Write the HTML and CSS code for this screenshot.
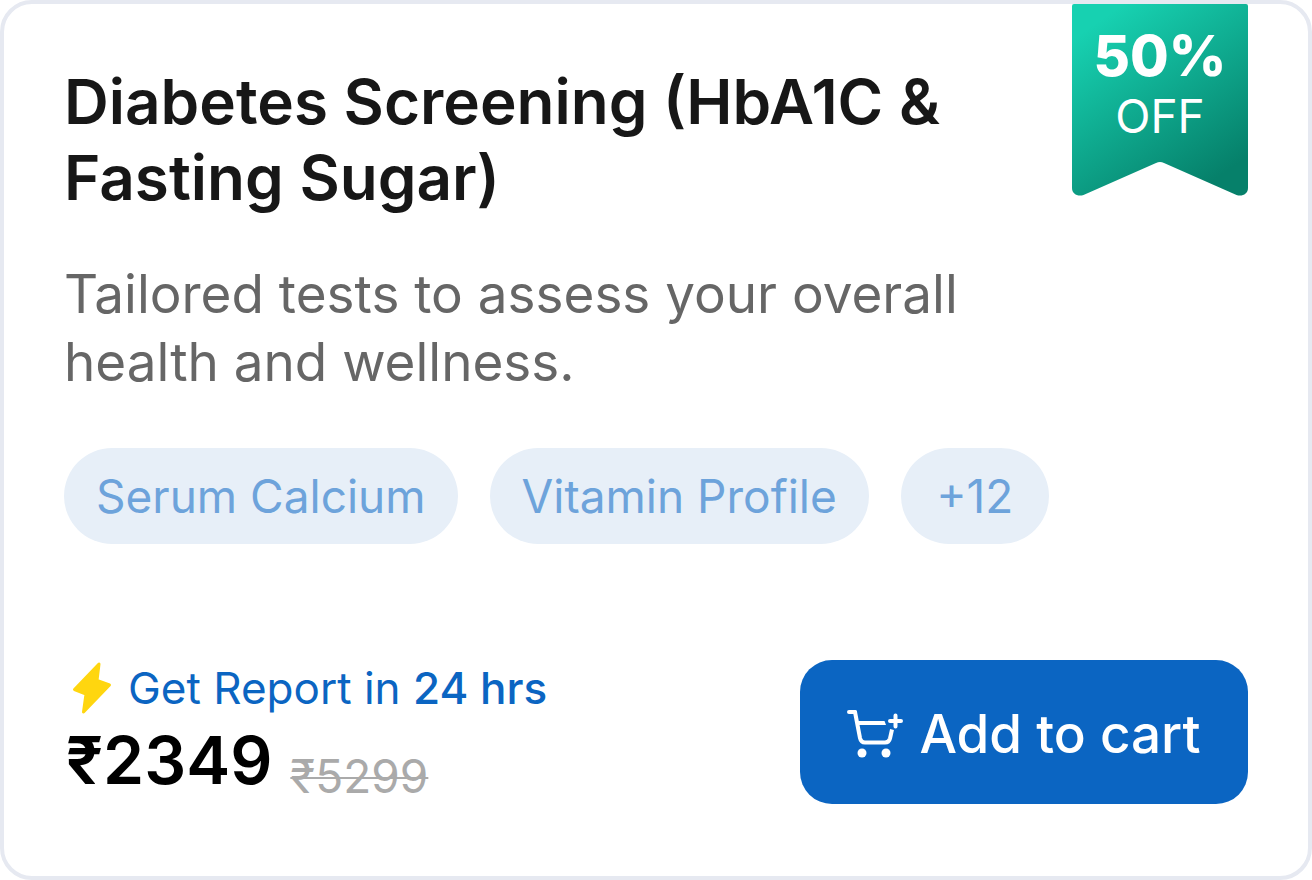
FILE: index.html
```html
<!DOCTYPE html>
<html lang="en">
<head>
    <meta charset="UTF-8">
    <meta name="viewport" content="width=device-width, initial-scale=1.0">
    <title>Diabetes Screening</title>
    <link rel="stylesheet" href="styles.css">
</head>
<body>
    <div class="card">
        <!-- Discount ribbon -->
        <div class="ribbon">
            <svg class="ribbon-shape" viewBox="0 0 176 192" aria-hidden="true">
                <defs>
                    <linearGradient id="ribbon-fill" gradientUnits="userSpaceOnUse" x1="30" y1="15" x2="142" y2="176">
                        <stop offset="0" stop-color="#17d1b1"/>
                        <stop offset="1" stop-color="#06806a"/>
                    </linearGradient>
                </defs>
                <path fill="url(#ribbon-fill)" d="M2 0H174Q176 0 176 2V184C176 190 170 193 164.500 191L92 159Q88 157 84 159L11.500 191C6 193 0 190 0 184V2Q0 0 2 0Z"/>
            </svg>
            <span class="ribbon-value">50%</span>
            <span class="ribbon-label">OFF</span>
        </div>

        <h1 class="title">Diabetes Screening (HbA1C &amp; Fasting Sugar)</h1>
        <p class="description">Tailored tests to assess your overall health and wellness.</p>

        <ul class="tags">
            <li class="tag">Serum Calcium</li>
            <li class="tag">Vitamin Profile</li>
            <li class="tag">+12</li>
        </ul>

        <!-- Price and cart button -->
        <div class="footer">
            <div class="details">
                <p class="report">
                    <svg class="bolt" viewBox="0 0 40 54" aria-hidden="true">
                        <path fill="#ffd60f" stroke="#ffd60f" stroke-width="3" stroke-linejoin="round" d="M27 3 2.500 28.500 14 33 11.500 51 37.500 24 25 19.500Z"/>
                    </svg>
                    <span>Get Report in <b>24 hrs</b></span>
                </p>
                <p class="prices">
                    <span class="price">₹2349</span>
                    <s class="old-price">₹5299</s>
                </p>
            </div>
            <button class="add-button" type="button">
                <svg class="cart-icon" viewBox="0 0 56 50" aria-hidden="true">
                    <g fill="none" stroke="#fff" stroke-width="4" stroke-linecap="round" stroke-linejoin="round">
                        <path d="M2 3H8L13 29Q14 33.500 18 33.500H38Q42 33.500 43 29.500L45 20.500" stroke-linecap="butt"/>
                        <path d="M2 3H8M43 12H54M48.500 6.500V17.500"/>
                    </g>
                    <path fill="#fff" d="M10 12H37.500L39 16H10Z"/>
                    <circle cx="15" cy="44" r="4.500" fill="#fff"/>
                    <circle cx="39" cy="44" r="4.500" fill="#fff"/>
                </svg>
                Add to cart
            </button>
        </div>
    </div>
</body>
</html>
```
FILE: styles.css
```css
body {
    font-family: Inter, "Liberation Sans", Arial, sans-serif;
    margin: 0;
    background: white;
}
h1, p, ul {
    margin: 0;
    padding: 0;
}
.card {
    position: relative;
    display: flex;
    flex-direction: column;
    box-sizing: border-box;
    min-height: 100vh;
    padding: 60px 60px 72px;
    border: 4px solid #e6e9f1;
    border-radius: 32px;
}
.ribbon {
    position: absolute;
    top: 0;
    right: 60px;
    display: flex;
    flex-direction: column;
    align-items: center;
    box-sizing: border-box;
    width: 176px;
    height: 192px;
    padding-top: 22px;
    color: white;
}
.ribbon-shape {
    position: absolute;
    top: 0;
    left: 0;
    width: 100%;
    height: 100%;
}
.ribbon-value,
.ribbon-label {
    position: relative;
    line-height: 60px;
}
.ribbon-value {
    font-size: 56px;
    font-weight: 800;
}
.ribbon-label {
    font-size: 46px;
}
.title {
    max-width: 940px;
    color: #171717;
    font-size: 62px;
    font-weight: 600;
    line-height: 76px;
}
.description {
    max-width: 940px;
    margin-top: 44px;
    color: #666;
    font-size: 53px;
    line-height: 68px;
}
.tags {
    display: flex;
    flex-wrap: wrap;
    gap: 32px;
    margin-top: 52px;
    list-style: none;
}
.tag {
    box-sizing: border-box;
    min-width: 148px;
    padding: 0 32px;
    border-radius: 48px;
    background: #e7eff8;
    color: #6da3db;
    font-size: 46px;
    line-height: 96px;
    text-align: center;
}
.footer {
    display: flex;
    justify-content: space-between;
    align-items: center;
    margin-top: auto;
}
.report {
    display: flex;
    align-items: center;
    gap: 16px;
    padding-left: 8px;
    color: #0b65c2;
    font-size: 44px;
    line-height: 56px;
}
.report b {
    font-weight: 500;
}
.bolt {
    width: 40px;
    height: 54px;
}
.prices {
    display: flex;
    align-items: flex-end;
    gap: 18px;
}
.price {
    color: black;
    font-size: 66px;
    font-weight: 600;
    line-height: 88px;
    padding-left: 2px;
}
.old-price {
    color: #aaa;
    font-size: 46px;
    line-height: 56px;
    text-decoration-thickness: 2px;
}
.add-button {
    display: flex;
    justify-content: center;
    align-items: center;
    gap: 16px;
    min-width: 448px;
    height: 144px;
    padding: 4px 44px 0;
    border: none;
    border-radius: 32px;
    background: #0b65c2;
    color: white;
    font-family: inherit;
    font-size: 53px;
    font-weight: 500;
    cursor: pointer;
}
.cart-icon {
    width: 56px;
    height: 50px;
}
```
